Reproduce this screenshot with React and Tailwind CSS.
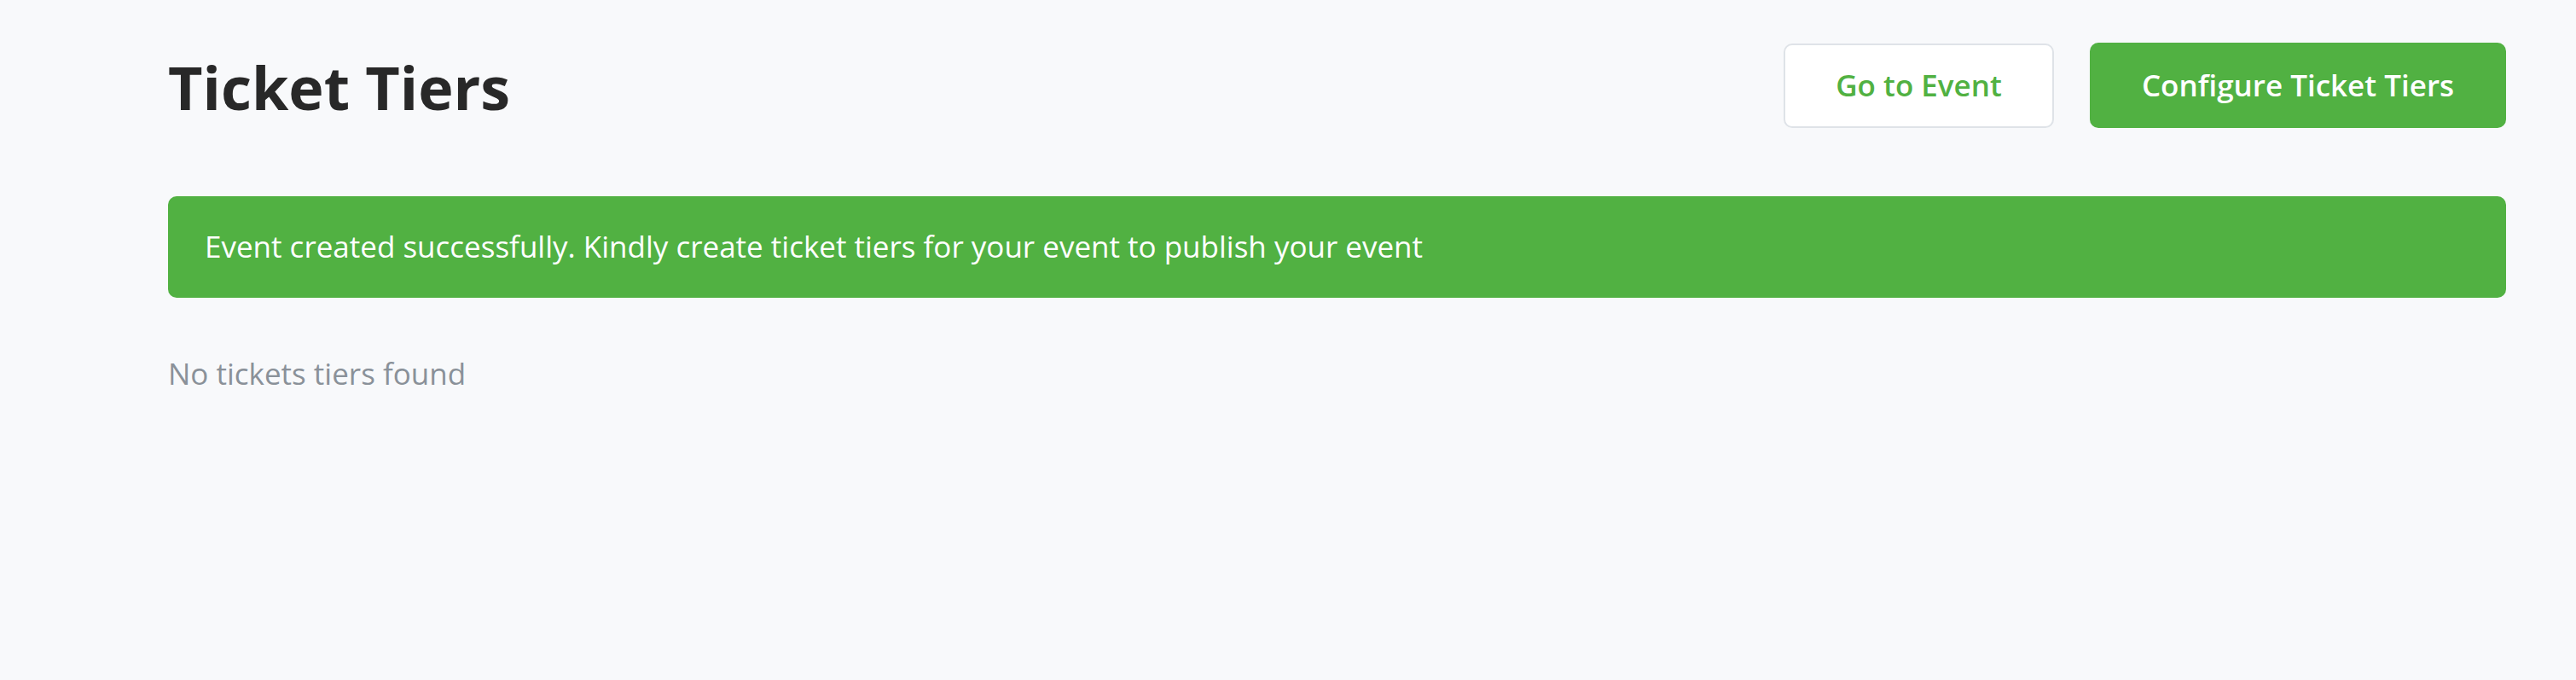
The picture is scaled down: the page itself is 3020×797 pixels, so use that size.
export default function App() {
  return (
    <div
      className="min-h-[797px] w-full bg-[#f8f9fb] pl-[197px] pr-[82px] pt-[50px]"
      style={{ fontFamily: '"Open Sans", "Noto Sans", sans-serif' }}
    >
      <div className="flex items-center justify-between">
        <h1 className="text-[70px] leading-none font-bold text-[#282828] pt-[4px]">Ticket Tiers</h1>
        <div className="flex items-center gap-[42px]">
          <button className="h-[99px] w-[317px] rounded-[10px] border-2 border-[#dfe3e8] bg-white text-[35px] font-semibold text-[#51b142]">
            Go to Event
          </button>
          <button className="h-[100px] w-[488px] rounded-[10px] bg-[#51b142] text-[35px] font-semibold text-white">
            Configure Ticket Tiers
          </button>
        </div>
      </div>
      <div className="mt-[80px] flex h-[119px] items-center rounded-[10px] bg-[#51b142] px-[43px] text-[35px] text-white">
        Event created successfully. Kindly create ticket tiers for your event to publish your event
      </div>
      <p className="mt-[64px] text-[35px] leading-[49px] text-[#8a9199]">No tickets tiers found</p>
    </div>
  );
}
